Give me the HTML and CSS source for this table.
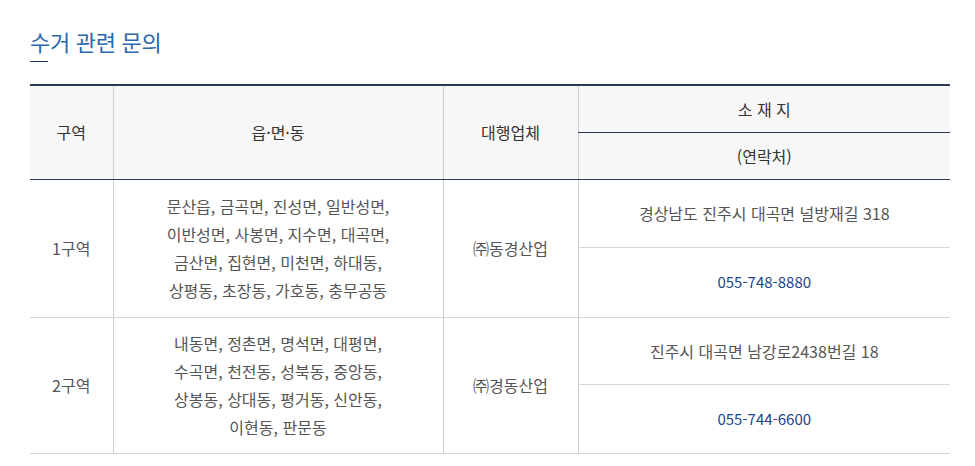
FILE: index.html
```html
<!DOCTYPE html>
<html lang="ko">
<head>
<meta charset="utf-8">
<link rel="stylesheet" href="styles.css">
</head>
<body>
<div class="page">
  <h2 class="title">수거 관련 문의</h2>
  <table class="info">
    <colgroup>
      <col class="c1"><col class="c2"><col class="c3"><col class="c4">
    </colgroup>
    <thead>
      <tr class="h1">
        <th rowspan="2">구역</th>
        <th rowspan="2">읍·면·동</th>
        <th rowspan="2">대행업체</th>
        <th class="top">소 재 지</th>
      </tr>
      <tr class="h2">
        <th>(연락처)</th>
      </tr>
    </thead>
    <tbody>
      <tr class="r1a">
        <td rowspan="2">1구역</td>
        <td rowspan="2" class="list">문산읍, 금곡면, 진성면, 일반성면,<br>이반성면, 사봉면, 지수면, 대곡면,<br>금산면, 집현면, 미천면, 하대동,<br>상평동, 초장동, 가호동, 충무공동</td>
        <td rowspan="2">㈜동경산업</td>
        <td class="addr">경상남도 진주시 대곡면 널방재길 318</td>
      </tr>
      <tr class="r1b">
        <td class="tel">055-748-8880</td>
      </tr>
      <tr class="r2a">
        <td rowspan="2">2구역</td>
        <td rowspan="2" class="list">내동면, 정촌면, 명석면, 대평면,<br>수곡면, 천전동, 성북동, 중앙동,<br>상봉동, 상대동, 평거동, 신안동,<br>이현동, 판문동</td>
        <td rowspan="2">㈜경동산업</td>
        <td class="addr">진주시 대곡면 남강로2438번길 18</td>
      </tr>
      <tr class="r2b">
        <td class="tel">055-744-6600</td>
      </tr>
    </tbody>
  </table>
</div>
</body>
</html>
```

FILE: styles.css
```css
html, body {
  margin: 0;
  padding: 0;
  background: #ffffff;
}
body {
  font-family: "Noto Sans CJK KR", "Noto Sans", sans-serif;
  color: #555555;
}
.page {
  padding: 26px 25px 0 30px;
}
.title {
  margin: 0;
  font-size: 22px;
  font-weight: 400;
  line-height: 30px;
  color: #2a68ab;
  letter-spacing: -0.3px;
  padding-bottom: 0;
}
.title::after {
  content: "";
  display: block;
  width: 18px;
  height: 1px;
  background: #1f3b60;
  margin-top: 5px;
}
.info {
  margin-top: 22px;
  width: 920px;
  border-collapse: collapse;
  table-layout: fixed;
  font-size: 16px;
  border-top: 2px solid #2b3b52;
}
.c1 { width: 83px; }
.c2 { width: 330px; }
.c3 { width: 135px; }
.c4 { width: 372px; }
.info th {
  background: #f7f7f7;
  font-weight: 400;
  color: #333333;
  text-align: center;
  vertical-align: middle;
  border-left: 1px solid #cccccc;
  border-bottom: 1px solid #2b3b52;
  padding: 0;
}
.info th:first-child { border-left: none; }
.info tr.h2 th { border-left: 1px solid #cccccc; }
.info tr.h1 { height: 47px; }
.info tr.h2 { height: 47px; }
.info td {
  text-align: center;
  vertical-align: middle;
  border-left: 1px solid #cccccc;
  border-bottom: 1px solid #d6d6d6;
  padding: 0;
  line-height: 28px;
}
.info tr.r1a td:first-child, .info tr.r2a td:first-child { border-left: none; }
.info tr.r1a { height: 68px; }
.info tr.r1b { height: 70px; }
.info tr.r2a { height: 67px; }
.info tr.r2b { height: 69px; }
.tel { color: #1d4588; font-size: 15px; }
```
